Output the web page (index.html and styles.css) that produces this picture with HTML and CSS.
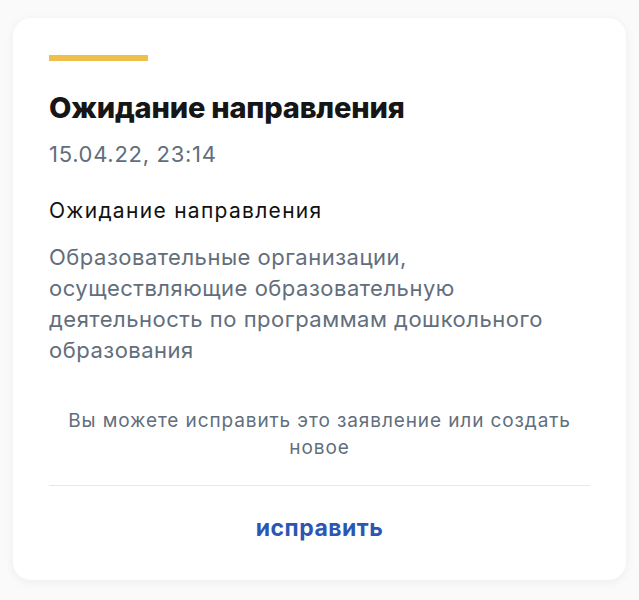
FILE: index.html
```html
<!DOCTYPE html>
<html lang="ru">
<head>
<meta charset="utf-8">
<link rel="stylesheet" href="styles.css">
</head>
<body>
<div class="page">
  <div class="card">
    <div class="status-bar"></div>
    <h1 class="title">Ожидание направления</h1>
    <div class="date">15.04.22, 23:14</div>
    <div class="subtitle">Ожидание направления</div>
    <div class="desc">Образовательные организации, осуществляющие образовательную деятельность по программам дошкольного образования</div>
    <div class="note">Вы можете исправить это заявление или создать новое</div>
    <div class="divider"></div>
    <div class="action">исправить</div>
  </div>
</div>
</body>
</html>
```
FILE: styles.css
```css
html, body {
  margin: 0;
  padding: 0;
  background: #fafafa;
}
body {
  font-family: Inter, "Noto Sans", sans-serif;
  -webkit-font-smoothing: antialiased;
}
.page {
  padding: 18px 13px;
}
.card {
  background: #ffffff;
  border-radius: 18px;
  box-shadow: 0 2px 10px rgba(30, 40, 80, 0.06);
  padding: 37px 36px 32px;
  height: 493px;
}
.status-bar {
  width: 99px;
  height: 6px;
  background: #efbf4b;
}
.title {
  margin: 29px 0 0;
  font-size: 29px;
  line-height: 36px;
  font-weight: 800;
  color: #161616;
  letter-spacing: -0.2px;
}
.date {
  margin-top: 14px;
  font-size: 22px;
  line-height: 28px;
  color: #626e7c;
  letter-spacing: 0.7px;
}
.subtitle {
  margin-top: 30px;
  font-size: 21px;
  line-height: 26px;
  color: #111111;
  letter-spacing: 1.3px;
}
.desc {
  margin-top: 18px;
  font-size: 22px;
  line-height: 31px;
  color: #626e7c;
  letter-spacing: 0.5px;
}
.note {
  margin-top: 41px;
  font-size: 19px;
  line-height: 27px;
  color: #626e7c;
  text-align: center;
  letter-spacing: 0.9px;
}
.divider {
  margin-top: 24px;
  height: 1px;
  background: #e6e8eb;
}
.action {
  margin-top: 28px;
  font-size: 23px;
  line-height: 28px;
  font-weight: 700;
  color: #2b57b4;
  text-align: center;
  letter-spacing: 0.5px;
}
```
